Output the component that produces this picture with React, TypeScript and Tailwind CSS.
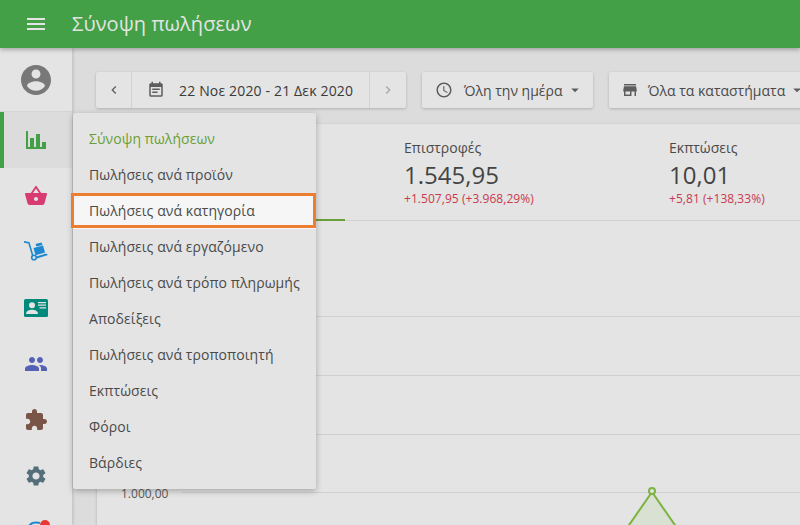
import React from "react";

const Icon = ({ d, className }: { d: string; className: string }) => (
  <svg viewBox="0 0 24 24" className={className} fill="currentColor">
    <path d={d} />
  </svg>
);

const icons = {
  menu: "M3 18h18v-2H3v2zm0-5h18v-2H3v2zm0-7v2h18V6H3z",
  account:
    "M12 2C6.48 2 2 6.48 2 12s4.48 10 10 10 10-4.48 10-10S17.52 2 12 2zm0 3c1.66 0 3 1.34 3 3s-1.34 3-3 3-3-1.34-3-3 1.34-3 3-3zm0 14.2c-2.5 0-4.71-1.28-6-3.22.03-1.99 4-3.08 6-3.08 1.99 0 5.97 1.09 6 3.08-1.29 1.94-3.5 3.22-6 3.22z",
  basket:
    "M17.21 9l-4.38-6.56c-.19-.28-.51-.42-.83-.42-.32 0-.64.14-.83.43L6.79 9H2c-.55 0-1 .45-1 1 0 .09.01.18.04.27l2.54 9.27c.23.84 1 1.46 1.92 1.46h13c.92 0 1.69-.62 1.93-1.46l2.54-9.27L23 10c0-.55-.45-1-1-1h-4.79zM9 9l3-4.4L15 9H9zm3 8c-1.1 0-2-.9-2-2s.9-2 2-2 2 .9 2 2-.9 2-2 2z",
  people:
    "M16 11c1.66 0 2.99-1.34 2.99-3S17.66 5 16 5c-1.66 0-3 1.34-3 3s1.34 3 3 3zm-8 0c1.66 0 2.99-1.34 2.99-3S9.66 5 8 5C6.34 5 5 6.34 5 8s1.34 3 3 3zm0 2c-2.33 0-7 1.17-7 3.5V19h14v-2.5c0-2.33-4.67-3.5-7-3.5zm8 0c-.29 0-.62.02-.97.05 1.16.84 1.97 1.97 1.97 3.45V19h6v-2.5c0-2.33-4.67-3.5-7-3.5z",
  puzzle:
    "M20.5 11H19V7c0-1.1-.9-2-2-2h-4V3.5C13 2.12 11.88 1 10.5 1S8 2.12 8 3.5V5H4c-1.1 0-1.99.9-1.99 2v3.8H3.5c1.49 0 2.7 1.21 2.7 2.7s-1.21 2.7-2.7 2.7H2V20c0 1.1.9 2 2 2h3.8v-1.5c0-1.49 1.21-2.7 2.7-2.7 1.49 0 2.7 1.21 2.7 2.7V22H17c1.1 0 2-.9 2-2v-4h1.5c1.38 0 2.5-1.12 2.5-2.5S21.88 11 20.5 11z",
  settings:
    "M19.14 12.94c.04-.3.06-.61.06-.94 0-.32-.02-.64-.07-.94l2.03-1.58c.18-.14.23-.41.12-.61l-1.92-3.32c-.12-.22-.37-.29-.59-.22l-2.39.96c-.5-.38-1.03-.7-1.62-.94l-.36-2.54c-.04-.24-.24-.41-.48-.41h-3.84c-.24 0-.43.17-.47.41l-.36 2.54c-.59.24-1.13.57-1.62.94l-2.39-.96c-.22-.08-.47 0-.59.22L2.74 8.87c-.12.21-.08.47.12.61l2.03 1.58c-.05.3-.09.63-.09.94s.02.64.07.94l-2.03 1.58c-.18.14-.23.41-.12.61l1.92 3.32c.12.22.37.29.59.22l2.39-.96c.5.38 1.03.7 1.62.94l.36 2.54c.05.24.24.41.48.41h3.84c.24 0 .44-.17.47-.41l.36-2.54c.59-.24 1.13-.56 1.62-.94l2.39.96c.22.08.47 0 .59-.22l1.92-3.32c.12-.22.07-.47-.12-.61l-2.01-1.58zM12 15.6c-1.98 0-3.6-1.62-3.6-3.6s1.62-3.6 3.6-3.6 3.6 1.62 3.6 3.6-1.62 3.6-3.6 3.6z",
  calendar:
    "M17 10H7v2h10v-2zm2-7h-1V1h-2v2H8V1H6v2H5c-1.11 0-1.99.9-1.99 2L3 19c0 1.1.89 2 2 2h14c1.1 0 2-.9 2-2V5c0-1.1-.9-2-2-2zm0 16H5V8h14v11zm-5-5H7v2h7v-2z",
  clock:
    "M11.99 2C6.47 2 2 6.48 2 12s4.47 10 9.99 10C17.52 22 22 17.52 22 12S17.52 2 11.99 2zM12 20c-4.42 0-8-3.58-8-8s3.58-8 8-8 8 3.58 8 8-3.58 8-8 8zm.5-13H11v6l5.25 3.15.75-1.23-4.5-2.67z",
  store: "M20 4H4v2h16V4zm1 10v-2l-1-5H4l-1 5v2h1v6h10v-6h4v6h2v-6h1zm-9 4H6v-4h6v4z",
  left: "M15.41 7.41L14 6l-6 6 6 6 1.41-1.41L10.83 12z",
  right: "M8.59 16.59L10 18l6-6-6-6-1.41 1.41L13.17 12z",
  caret: "M7 10l5 5 5-5z",
};

const StatsIcon = () => (
  <svg viewBox="0 0 20 18" className="w-5 h-[18px] text-[#43a047]" fill="currentColor">
    <path d="M0 0h2v16h2V7h4v9h2V3h4v13h2v-5h4v7H0z" />
  </svg>
);

const TruckIcon = () => (
  <svg viewBox="0 0 24 22" className="w-6 h-[22px] text-[#1e88d0]" fill="currentColor">
    <path d="M0 0 5.500 1 9.500 14.500 8 15 4.300 2.500 0 1.800z" />
    <circle cx="10" cy="16.500" r="2.300" fill="none" stroke="currentColor" strokeWidth="1.600" />
    <path d="M12.500 15.500 22 12.500 24 14 13 17.500z" />
    <path d="M9.500 7 19 4.500 21 11.500 11.500 14.200z" />
    <path d="M11.500 3 17.500 1.500 18.500 4 12.500 5.600z" />
  </svg>
);

const CardIcon = () => (
  <svg viewBox="0 0 24 18" className="w-6 h-[18px]">
    <rect width="24" height="18" rx="1.500" fill="#00897b" />
    <circle cx="8" cy="6.300" r="3" fill="#e4e4e4" />
    <path d="M2 15c0-3 3.200-4.200 6-4.200s6 1.200 6 4.200z" fill="#e4e4e4" />
    <path d="M14 3h8v1.200h-8zM14 5.600h8v1.200h-8zM15.500 8.200H22v1.200h-6.500z" fill="#e4e4e4" />
  </svg>
);

const SideRow = ({ children, active }: { children: React.ReactNode; active?: boolean }) => (
  <div
    className={`h-14 flex items-center justify-center shrink-0 border-l-4 pr-1 ${
      active ? "border-[#43a047] bg-[#dcdcdc]" : "border-transparent"
    }`}
  >
    {children}
  </div>
);

const menuItems = [
  "Πωλήσεις ανά προϊόν",
  "Πωλήσεις ανά κατηγορία",
  "Πωλήσεις ανά εργαζόμενο",
  "Πωλήσεις ανά τρόπο πληρωμής",
  "Αποδείξεις",
  "Πωλήσεις ανά τροποποιητή",
  "Εκπτώσεις",
  "Φόροι",
  "Βάρδιες",
];

const Stat = ({ label, value, delta }: { label: string; value: string; delta: string }) => (
  <div className="w-[265px] shrink-0 pl-[59px] pt-[15px]">
    <div className="text-[14px] leading-[18px] text-[#4a4a4a]">{label}</div>
    <div className="text-[24px] leading-[32px] mt-[2px] text-[#444444]">{value}</div>
    <div className="text-[12px] leading-[16px] tracking-[0.05px] text-[#c9394f]">{delta}</div>
  </div>
);

const Dropdown = ({ icon, label, className, gap }: { icon: string; label: string; className: string; gap: string }) => (
  <div className={`h-9 bg-[#e4e4e4] rounded-[2px] shadow-[0_1px_3px_rgba(0,0,0,0.2)] flex items-center shrink-0 ${className}`}>
    <Icon d={icon} className="w-[18px] h-[18px] text-[#5e5e5e]" />
    <span className={`text-[14px] text-[#4a4a4a] whitespace-nowrap ${gap}`}>{label}</span>
    <Icon d={icons.caret} className="ml-[3px] w-[18px] h-[18px] text-[#5e5e5e]" />
  </div>
);

export default function App() {
  return (
    <div className="relative w-[800px] h-[525px] overflow-hidden bg-[#dcdcdc] flex flex-col font-['Open_Sans','Noto_Sans',sans-serif]">
      <header className="relative z-20 h-12 shrink-0 bg-[#43a047] flex items-center pl-6 shadow-[0_2px_4px_rgba(0,0,0,0.25)]">
        <Icon d={icons.menu} className="w-6 h-6 text-[#e4e4e4]" />
        <h1 className="ml-6 text-[20px] font-normal tracking-[0.07px] text-[#e4e4e4]">Σύνοψη πωλήσεων</h1>
      </header>

      <div className="flex flex-1 min-h-0">
        <aside className="relative z-10 w-[72px] shrink-0 bg-[#e4e4e4] shadow-[1px_0_3px_rgba(0,0,0,0.15)] overflow-hidden">
          <div className="h-16 flex items-center justify-center border-b border-[#d4d4d4]">
            <Icon d={icons.account} className="w-9 h-9 text-[#787878]" />
          </div>
          <SideRow active>
            <StatsIcon />
          </SideRow>
          <SideRow>
            <Icon d={icons.basket} className="w-6 h-6 text-[#d83a72]" />
          </SideRow>
          <SideRow>
            <TruckIcon />
          </SideRow>
          <SideRow>
            <CardIcon />
          </SideRow>
          <SideRow>
            <Icon d={icons.people} className="w-6 h-6 text-[#5461b4]" />
          </SideRow>
          <SideRow>
            <Icon d={icons.puzzle} className="w-6 h-6 text-[#795548]" />
          </SideRow>
          <SideRow>
            <Icon d={icons.settings} className="w-6 h-6 text-[#546e7a]" />
          </SideRow>
          <SideRow>
            <svg viewBox="0 0 24 24" className="w-6 h-6 overflow-visible">
              <path d="M5 6C7 3 11 2 16 3" fill="none" stroke="#1e88d0" strokeWidth="2" />
              <circle cx="21" cy="5" r="5" fill="#e53935" />
            </svg>
          </SideRow>
        </aside>

        <main className="flex-1 min-w-0 pl-6 pt-6 overflow-hidden">
          <div className="flex">
            <div className="w-[310px] h-9 shrink-0 flex bg-[#e4e4e4] rounded-[2px] shadow-[0_1px_3px_rgba(0,0,0,0.2)]">
              <div className="w-9 flex items-center justify-center border-r border-[#d2d2d2]">
                <Icon d={icons.left} className="w-4 h-4 text-[#5e5e5e]" />
              </div>
              <div className="flex-1 flex items-center pl-[15px]">
                <Icon d={icons.calendar} className="w-[18px] h-[18px] text-[#5e5e5e]" />
                <span className="ml-[14px] text-[14px] tracking-[0.16px] text-[#3a3a3a] whitespace-nowrap">22 Νοε 2020 - 21 Δεκ 2020</span>
              </div>
              <div className="w-[37px] flex items-center justify-center border-l border-[#d2d2d2]">
                <Icon d={icons.right} className="w-4 h-4 text-[#a8a8a8]" />
              </div>
            </div>
            <Dropdown icon={icons.clock} label="Όλη την ημέρα" gap="ml-[11px]" className="ml-4 w-[171px] pl-[13px]" />
            <Dropdown icon={icons.store} label="Όλα τα καταστήματα" gap="ml-[9px]" className="ml-4 w-[220px] pl-[12px]" />
          </div>

          <section className="mt-4 ml-px w-[800px] h-[420px] bg-[#e4e4e4] shadow-[0_1px_3px_rgba(0,0,0,0.2)]">
            <div className="flex h-[97px] border-b border-[#d0d0d0]">
              <div className="w-[248px] shrink-0 border-b-2 border-[#689f38] h-[97px]" />
              <Stat label="Επιστροφές" value="1.545,95" delta="+1.507,95 (+3.968,29%)" />
              <Stat label="Εκπτώσεις" value="10,01" delta="+5,81 (+138,33%)" />
            </div>
            <div className="relative pt-[95px] pl-[85px]">
              <div className="h-[59px] border-t border-[#d0d0d0]" />
              <div className="h-[59px] border-t border-[#d0d0d0]" />
              <div className="h-[58px] border-t border-[#d0d0d0]" />
              <div className="border-t border-[#d0d0d0] h-10" />
              <span className="absolute left-[24px] top-[265px] text-[12px] leading-4 text-[#5a5a5a]">1.000,00</span>
              <svg viewBox="0 0 60 40" className="absolute left-[525px] top-[266px] w-[60px] h-10">
                <path d="M30 5 L0 48 L60 48 Z" fill="#d9e1d2" />
                <path d="M5 41 L30 5 L55 41" fill="none" stroke="#7cb342" strokeWidth="2" />
                <circle cx="30" cy="4" r="3" fill="#e4e4e4" stroke="#7cb342" strokeWidth="2" />
              </svg>
            </div>
          </section>
        </main>
      </div>

      {/* reports dropdown */}
      <div className="absolute z-30 left-[73px] top-[113px] w-[243px] py-2 bg-[#e4e4e4] rounded-[2px] shadow-[0_2px_6px_rgba(0,0,0,0.28)]">
        <div className="h-9 flex items-center pl-4 pb-[2px] text-[14px] tracking-[0.07px] text-[#689f38]">Σύνοψη πωλήσεων</div>
        {menuItems.map((item) => (
          <div
            key={item}
            className={`relative h-9 flex items-center pl-4 pb-[2px] text-[14px] tracking-[0.07px] text-[#4a4a4a] whitespace-nowrap ${
              item === "Πωλήσεις ανά κατηγορία" ? "bg-[#f6f6f6]" : ""
            }`}
          >
            {item}
            {item === "Πωλήσεις ανά κατηγορία" && (
              <span className="absolute -left-[2px] right-0 top-0 h-[35px] border-[3px] border-[#ed7d31]" />
            )}
          </div>
        ))}
      </div>
    </div>
  );
}
